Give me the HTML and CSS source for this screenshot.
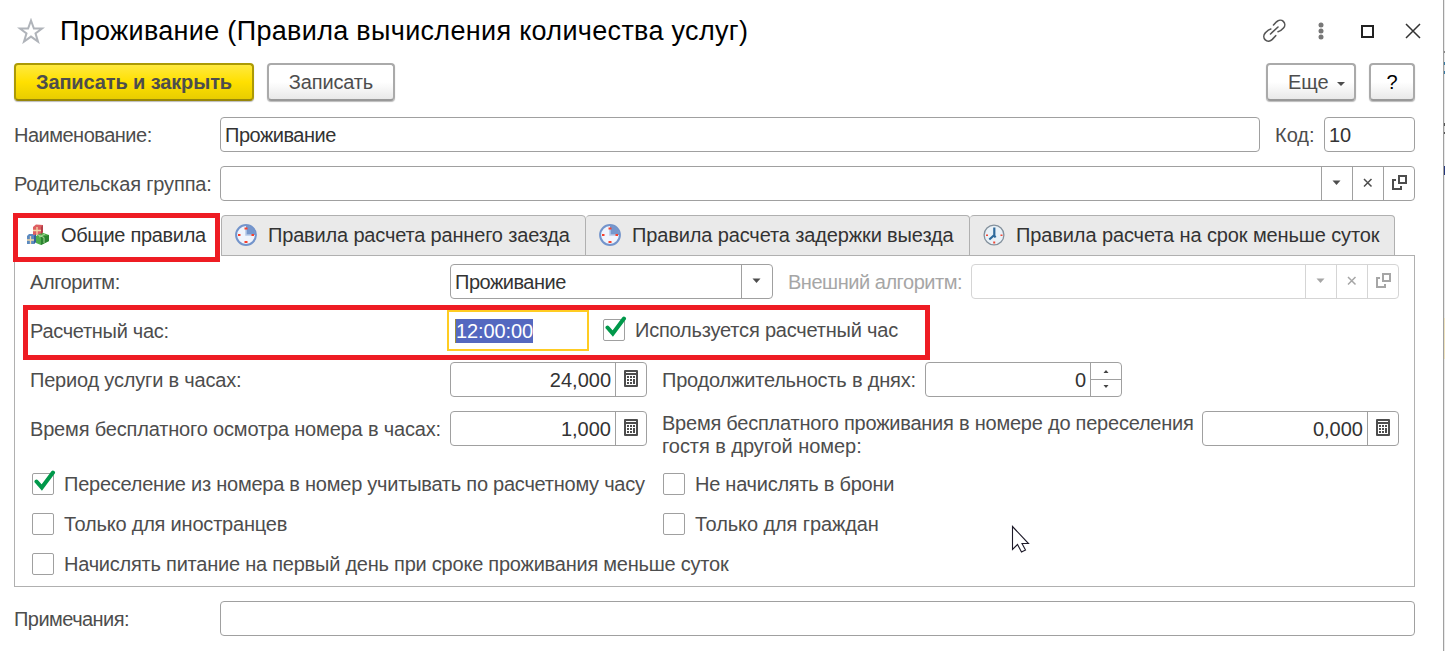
FILE: index.html
```html
<!DOCTYPE html>
<html lang="ru">
<head>
<meta charset="utf-8">
<title>Проживание (Правила вычисления количества услуг)</title>
<link rel="stylesheet" href="styles.css">
</head>
<body>
<svg class="defs" width="0" height="0">
  <symbol id="down" viewBox="0 0 30 33"><path d="M10.500 13.500h8l-4 4.500z" fill="currentColor"/></symbol>
  <symbol id="clear" viewBox="0 0 30 33"><path d="M11 12l7.500 7.500M18.500 12L11 19.500" stroke="currentColor" stroke-width="1.500"/></symbol>
  <symbol id="open" viewBox="0 0 30 33"><path d="M15 9h7v7h-7zM12 13H9v9h8v-3" fill="none" stroke="currentColor" stroke-width="2"/></symbol>
  <symbol id="calc" viewBox="0 0 30 33"><path fill="#4d4d4d" fill-rule="evenodd" d="M9 7h12q1 0 1 1v15q0 1-1 1H9q-1 0-1-1V8q0-1 1-1zM10 9v1h10V9zM10 12v10h10V12z"/><path fill="#4d4d4d" d="M11 13h2v2h-2zM14 13h2v2h-2zM17 13h2v2h-2zM11 16h2v2h-2zM14 16h2v2h-2zM11 19h2v2h-2zM14 19h2v2h-2zM17 16h2v5h-2z"/></symbol>
  <symbol id="tick" viewBox="0 0 26 26"><path d="M4.500 11.500l5.300 6L21 2.500" fill="none" stroke="#00984a" stroke-width="4" stroke-linecap="round"/></symbol>
  <symbol id="timer" viewBox="0 0 24 24"><circle cx="12" cy="12" r="9.900" fill="#f0f4fd" stroke="#7394cb" stroke-width="2"/><path d="M12 12V2.500A9.500 9.500 0 0 1 21.500 12z" fill="#7696cc"/><path d="M12 6v6h6" fill="none" stroke="#b4c8e8" stroke-width="1.500"/><path d="M10.500 4.500h3v2h-3zM17.500 11h2.500v2h-2.500zM10.500 18h3v2h-3zM4 11h2.500v2H4z" fill="#f8402c"/></symbol>
</svg>
<div class="screen">
  <main class="window">
    <header class="titlebar">
      <svg class="star" width="28" height="26" viewBox="0 0 28 26"><path d="M14 2.500l2.900 8h8.200l-6.600 4.900 2.500 8.200-7-5-7 5 2.500-8.200-6.600-4.900h8.200z" fill="none" stroke="#b0b4ba" stroke-width="2"/></svg>
      <h1>Проживание (Правила вычисления количества услуг)</h1>
      <svg class="link" width="26" height="26" viewBox="0 0 26 26" fill="none" stroke="#555" stroke-width="1.600" stroke-linecap="round"><path d="M9.500 16l7.500-7M12.500 7l3-3.200c2-1.900 5-2.200 6.800-.5s2 4.700.2 6.700c-1.500 1.700-3 3.200-5.500 3.700M14.700 17.700l-3.400 3.700c-2 2-5 2.400-7 .5s-1.900-4.900 0-7c1.500-1.600 3-3.400 5.500-3.900"/></svg>
      <svg class="dots" width="6" height="18" viewBox="0 0 6 18" fill="#777"><circle cx="3" cy="3" r="2.500"/><circle cx="3" cy="9" r="2.500"/><circle cx="3" cy="15" r="2.500"/></svg>
      <svg class="max" width="13" height="13" viewBox="0 0 13 13"><path d="M1 1h11v11H1z" fill="none" stroke="#222" stroke-width="2"/></svg>
      <svg class="close" width="16" height="16" viewBox="0 0 16 16"><path d="M1 1l14 14M15 1L1 15" stroke="#333" stroke-width="1.500"/></svg>
    </header>
    <div class="toolbar">
      <button class="btn primary"><span class="t-saveclose">Записать и закрыть</span></button>
      <button class="btn save"><span class="t-save">Записать</span></button>
      <button class="btn more"><span class="t-more">Еще</span><svg width="8" height="5" viewBox="0 0 8 5"><path d="M0 0h8L4 4z" fill="#4d4d4d"/></svg></button>
      <button class="btn help">?</button>
    </div>
    <div class="row head">
      <label><span class="t-name">Наименование:</span></label>
      <div class="field grow"><span class="value t-live">Проживание</span></div>
      <label class="code"><span class="t-code">Код:</span></label>
      <div class="field codefield"><span class="value">10</span></div>
    </div>
    <div class="row head">
      <label><span class="t-parent">Родительская группа:</span></label>
      <div class="field grow"><span class="value"></span><svg class="cell"><use href="#down"/></svg><svg class="cell"><use href="#clear"/></svg><svg class="cell"><use href="#open"/></svg></div>
    </div>
    <nav class="tabs">
      <div class="tab active">
        <svg width="24" height="24" viewBox="0 0 24 24"><path d="M1 13l2-2h7v8l-2 2H1z" fill="#5b8ac0"/><path d="M7 4l3-2.500 7 .5v7l-2 3H7z" fill="#de5f62"/><path d="M10 13l6-3.500 7 2.500v6l-8 4-5-2z" fill="#4fae4b"/><path d="M15 14l8-2v6l-8 4z" fill="#2b8431"/><path d="M17 2v7l-2 3V4z" fill="#b33f48"/><path d="M10 11v8l-2 2v-8z" fill="#35619a"/><path d="M4.500 13v8M1 17h7M11 4v8M7 7.500h8" stroke="#f3d9a8" stroke-width="1.300"/><path d="M12 12l6 2.500V20M19 11l-6 3" fill="none" stroke="#a9d79a"/></svg>
        <span class="t-tab1">Общие правила</span>
      </div>
      <div class="tab tab2"><svg width="24" height="24"><use href="#timer"/></svg><span class="t-tab2">Правила расчета раннего заезда</span></div>
      <div class="tab tab3"><svg width="24" height="24"><use href="#timer"/></svg><span class="t-tab3">Правила расчета задержки выезда</span></div>
      <div class="tab tab4"><svg width="24" height="24" viewBox="0 0 24 24"><circle cx="12" cy="12" r="9.900" fill="#e9f1f7" stroke="#83909c" stroke-width="1.300"/><path d="M12.300 4.500V12l-5 4.500M12 12l1.500 2.500" fill="none" stroke="#2e6a9c" stroke-width="2.200"/><path d="M4 11.500h2v1.500H4zM18.500 11.500h2v1.500h-2zM11.200 18.500h2v2h-2z" fill="#f04a38"/></svg><span class="t-tab4">Правила расчета на срок меньше суток</span></div>
    </nav>
    <section class="panel">
      <div class="row">
        <label class="first"><span class="t-alg">Алгоритм:</span></label>
        <div class="field alg"><span class="value t-live">Проживание</span><svg class="cell"><use href="#down"/></svg></div>
        <label class="ext"><span class="t-ext">Внешний алгоритм:</span></label>
        <div class="field grow disabled"><span class="value"></span><svg class="cell"><use href="#down"/></svg><svg class="cell"><use href="#clear"/></svg><svg class="cell"><use href="#open"/></svg></div>
      </div>
      <div class="row">
        <label class="first"><span class="t-hour">Расчетный час:</span></label>
        <div class="timefield"><span class="selected">12:00:00</span></div>
        <div class="check usehour"><i class="box"><svg class="tick"><use href="#tick"/></svg></i><span class="t-use">Используется расчетный час</span></div>
      </div>
      <div class="row">
        <label class="first"><span class="t-period">Период услуги в часах:</span></label>
        <div class="field num"><span class="value">24,000</span><svg class="cell"><use href="#calc"/></svg></div>
        <label class="days"><span class="t-days">Продолжительность в днях:</span></label>
        <div class="field num"><span class="value">0</span><div class="spin"><svg viewBox="0 0 30 16"><path d="M12.500 10h5L15 7z" fill="#444"/></svg><svg viewBox="0 0 30 16"><path d="M12.500 5h5L15 8z" fill="#444"/></svg></div></div>
      </div>
      <div class="row">
        <label class="first"><span class="t-free">Время бесплатного осмотра номера в часах:</span></label>
        <div class="field num"><span class="value">1,000</span><svg class="cell"><use href="#calc"/></svg></div>
        <label class="move"><span class="t-move1">Время бесплатного проживания в номере до переселения</span><br><span class="t-move2">гостя в другой номер:</span></label>
        <div class="field num"><span class="value">0,000</span><svg class="cell"><use href="#calc"/></svg></div>
      </div>
      <div class="checks">
        <div class="check"><i class="box"><svg class="tick"><use href="#tick"/></svg></i><span class="t-c1">Переселение из номера в номер учитывать по расчетному часу</span></div>
        <div class="check"><i class="box"></i><span class="t-c2">Не начислять в брони</span></div>
        <div class="check"><i class="box"></i><span class="t-c3">Только для иностранцев</span></div>
        <div class="check"><i class="box"></i><span class="t-c4">Только для граждан</span></div>
        <div class="check wide"><i class="box"></i><span class="t-c5">Начислять питание на первый день при сроке проживания меньше суток</span></div>
      </div>
      <div class="mark mark-hour"></div>
      <svg class="cursor" width="20" height="29" viewBox="0 0 20 29"><path d="M1.500 1.500v23l5-5 4 7.500 4-2-3.500-6.500h6.500z" fill="#fff" stroke="#1d1a29" stroke-width="1.100"/></svg>
    </section>
    <div class="row head notes">
      <label><span class="t-notes">Примечания:</span></label>
      <div class="field grow"></div>
    </div>
  </main>
  <aside class="behind"></aside>
</div>
</body>
</html>
```
FILE: styles.css
```css
*, ::after { box-sizing: border-box; }
body { margin: 0; background: #fff; color: #4d4d4d; font: 20px/24px "Liberation Sans", Arial, sans-serif; }
.defs { position: absolute; }
.screen { display: flex; height: 651px; overflow: hidden; white-space: nowrap; }
.window { width: 1444px; padding: 0 28px 0 14px; border-right: 1px solid #a0a0a0; }
.behind { width: 1px; background: linear-gradient(#e9e9e9 0 51px, #888 51px 53px, #e9e9e9 53px 62px, #377ba5 62px 65px, #ddd 65px 71px, #377ba5 71px 74px, #e9e9e9 74px 123px, #555 123px 126px, #ddd 126px 132px, #555 132px 134px, #e9e9e9 134px 166px, #25377d 166px 175px, #e9e9e9 175px 318px, #eee2bd 318px 359px, #e9e9e9 359px); }
svg { display: block; flex: none; }

.titlebar { display: flex; align-items: center; height: 63px; padding: 0 0 1px 3px; color: #000; }
h1 { margin: 0 auto 0 15px; font-size: 27px; font-weight: 400; line-height: 32px; letter-spacing: .32px; }
.dots { margin-left: 31px; }
.max { margin-left: 37px; }
.close { margin-left: 31px; margin-right: -6px; }

.toolbar { display: flex; height: 54px; }
.btn { height: 38px; padding: 0; border: 2px solid #aaa; border-bottom-color: #999; border-radius: 4px; background: linear-gradient(#fff 50%, #e9e9e9); box-shadow: 0 1px 1px #bbb; color: #4d4d4d; font: inherit; }
.primary { width: 240px; margin-right: 13px; border-color: #ac9a05; border-bottom-color: #97860a; background: linear-gradient(#ffe93f, #ffe000 50%, #e8cd00); font-weight: 700; }
.save { width: 128px; margin-right: auto; }
.more { display: flex; align-items: center; width: 90px; padding-left: 20px; margin-right: 13px; }
.more svg { margin: 4px 0 0 8px; }
.help { width: 46px; color: #000; }

.row { display: flex; align-items: center; height: 35px; margin-bottom: 14px; }
.head label { width: 206px; }
.head .code { width: 64px; padding-left: 15px; }
.codefield { width: 91px; }
.grow { flex: 1; }
.field { display: flex; height: 35px; border: 1px solid #a0a0a0; border-radius: 4px; color: #333; }
.value { flex: 1; padding: 5px 4px; }
.cell { width: 31px; height: 33px; border-left: 1px solid #a0a0a0; color: #4d4d4d; }
.disabled, .disabled .cell { border-color: #d5d5d5; color: #a6a6a6; }

.tabs { display: flex; position: relative; z-index: 1; height: 41px; color: #333; }
.tab { display: flex; align-items: center; height: 41px; padding: 0 0 1px 12px; border: 1px solid #b0b0b0; border-left: 0; border-radius: 4px 4px 0 0; background: #eaeaea; }
.tab svg { margin-right: 10px; }
.active { position: relative; width: 207px; border: 0; background: #fff; }
.active::after { content: ""; position: absolute; left: -1px; top: -2px; width: 207px; height: 49px; border: 5px solid #ee1c23; }
.active svg { margin-right: 11px; }
.tab2 { width: 365px; padding-left: 12px; border-left: 1px solid #b0b0b0; }
.tab3 { width: 384px; }
.tab4 { width: 425px; }

.panel { position: relative; height: 332px; margin: -1px 0 14px; padding: 8px 15px; border: 1px solid #b0b0b0; }
.first { width: 420px; }
.alg { width: 323px; }
.ext { width: 198px; padding-left: 15px; color: #a6a6a6; }
.num { width: 197px; }
.num .value { text-align: right; }
.timefield { width: 142px; height: 41px; margin: 0 14px 0 -3px; padding: 7px 6px; border: 2px solid #fc2; }
.selected { display: block; width: 78px; height: 24px; border-left: 1px solid #a08d38; background: #5468c0; color: #fff; letter-spacing: -.1px; }
.spin { width: 31px; border-left: 1px solid #a0a0a0; }
.spin svg { width: 30px; height: 16px; }
.spin svg + svg { height: 17px; border-top: 1px solid #a0a0a0; }
.days { width: 278px; padding-left: 15px; }
.move { width: 555px; padding: 12px 0 0 15px; line-height: 23px; }

.check { display: flex; align-items: center; }
.usehour { padding-bottom: 2px; }
.box { position: relative; width: 22px; height: 22px; margin-right: 10px; border: 1px solid #a0a0a0; border-radius: 2px; background: #fff; }
.tick { position: absolute; left: -1px; top: -4px; width: 26px; height: 26px; }
.checks { display: grid; grid-template-columns: 631px 1fr; grid-auto-rows: 40px; padding: 4px 0 0 2px; }
.wide { grid-column: span 2; }
.mark { position: absolute; border: 5px solid #ee1c23; }
.mark-hour { left: 8px; top: 49px; width: 907px; height: 55px; }
.cursor { position: absolute; left: 996px; top: 269px; }

/* Tracking of the individual captions */
.t-saveclose { letter-spacing: -.12px; }
.t-save { letter-spacing: -.15px; }
.t-name { letter-spacing: -.5px; }
.t-live { letter-spacing: -.5px; }
.t-parent { letter-spacing: -.15px; }
.t-tab1 { letter-spacing: -.32px; }
.t-tab2 { letter-spacing: -.17px; }
.t-tab3 { letter-spacing: -.13px; }
.t-tab4 { letter-spacing: -.11px; }
.t-alg { letter-spacing: -.44px; }
.t-ext { letter-spacing: -.47px; }
.t-hour { letter-spacing: -.3px; }
.t-use { letter-spacing: -.2px; }
.t-period { letter-spacing: -.19px; }
.t-days { letter-spacing: -.2px; }
.t-free { letter-spacing: -.17px; }
.t-move1 { letter-spacing: -.23px; }
.t-move2 { letter-spacing: -.05px; }
.t-c1 { letter-spacing: -.24px; }
.t-c2 { letter-spacing: -.25px; }
.t-c3 { letter-spacing: -.2px; }
.t-c4 { letter-spacing: -.1px; }
.t-c5 { letter-spacing: -.23px; }
.t-notes { letter-spacing: -.55px; }
```
